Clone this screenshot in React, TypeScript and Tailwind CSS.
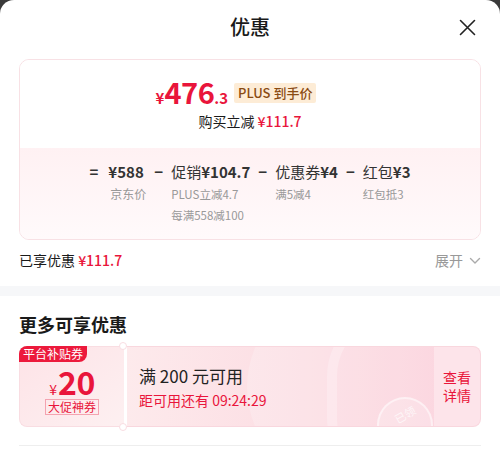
import React from "react";

const RED = "#e9153b";

function Minus() {
  return <span className="text-[15px] leading-[22px] font-bold text-[#333]">−</span>;
}

export default function App() {
  return (
    <div className="w-[500px] h-[449px] bg-[#3a3a3a] overflow-hidden" style={{ fontFamily: '"Noto Sans CJK SC", "Noto Sans", sans-serif' }}>
      <div className="w-[500px] h-[449px] bg-white rounded-t-[14px] flex flex-col">
        {/* Header */}
        <div className="relative h-[54px] flex items-center justify-center shrink-0">
          <span className="text-[20px] font-medium text-[#1a1a1a] leading-none">优惠</span>
          <svg className="absolute right-[24px] top-[19px]" width="17" height="17" viewBox="0 0 17 17" fill="none">
            <path d="M1.5 1.5 L15.5 15.5 M15.5 1.5 L1.5 15.5" stroke="#222" strokeWidth="1.6" strokeLinecap="round" />
          </svg>
        </div>

        {/* Summary card */}
        <div className="mx-[19px] mt-[5px] h-[181px] border border-[#f8e1e5] rounded-[10px] overflow-hidden flex flex-col shrink-0">
          <div className="h-[88px] bg-white flex flex-col items-center pt-[18px]">
            <div className="flex items-center gap-[6px] h-[30px] pr-[28px]">
              <div className="flex items-baseline font-bold" style={{ color: RED }}>
                <span className="text-[15px]">¥</span>
                <span className="text-[29px] leading-none tracking-[-0.5px]">476</span>
                <span className="text-[15px]">.3</span>
              </div>
              <span className="bg-[#fdecd6] text-[#8a4b12] text-[13px] leading-[20px] px-[4px] rounded-[2px] font-medium">PLUS 到手价</span>
            </div>
            <div className="mt-[3px] text-[14px] text-[#1a1a1a] leading-[20px]">
              购买立减 <span className="font-medium" style={{ color: RED }}>¥111.7</span>
            </div>
          </div>
          <div className="flex-1 bg-gradient-to-b from-[#fff1f3] to-[#fffafb] pt-[13px]">
            <div className="flex justify-center items-start gap-[8px] text-[#333]">
              <span className="text-[15px] leading-[22px] font-semibold mr-[2px]">=</span>
              <div className="flex flex-col">
                <span className="text-[15px] leading-[22px] font-semibold">¥588</span>
                <span className="text-[12px] leading-[22px] text-[#999] pl-[2px]">京东价</span>
              </div>
              <Minus />
              <div className="flex flex-col">
                <span className="text-[15px] leading-[22px]">促销<span className="font-semibold">¥104.7</span></span>
                <span className="text-[11.5px] leading-[22px] text-[#999]">PLUS立减4.7</span>
                <span className="text-[11.5px] leading-[20px] text-[#999]">每满558减100</span>
              </div>
              <Minus />
              <div className="flex flex-col">
                <span className="text-[15px] leading-[22px]">优惠券<span className="font-semibold">¥4</span></span>
                <span className="text-[11.5px] leading-[22px] text-[#999]">满5减4</span>
              </div>
              <Minus />
              <div className="flex flex-col">
                <span className="text-[15px] leading-[22px]">红包<span className="font-semibold">¥3</span></span>
                <span className="text-[11.5px] leading-[22px] text-[#999]">红包抵3</span>
              </div>
            </div>
          </div>
        </div>

        {/* Enjoyed row */}
        <div className="mx-[19px] h-[41px] flex items-center justify-between shrink-0">
          <span className="text-[14px] text-[#1a1a1a]">
            已享优惠 <span className="font-medium" style={{ color: RED }}>¥111.7</span>
          </span>
          <span className="flex items-center gap-[6px] text-[14px] text-[#999]">
            展开
            <svg width="12" height="8" viewBox="0 0 12 8" fill="none">
              <path d="M1.5 1.5 L6 6 L10.5 1.5" stroke="#aaa" strokeWidth="1.4" strokeLinecap="round" strokeLinejoin="round" />
            </svg>
          </span>
        </div>

        <div className="h-[5px] shrink-0" />
        <div className="h-[10px] bg-[#f6f7f9] shrink-0" />

        {/* More offers */}
        <div className="px-[19px] pt-[16px] shrink-0">
          <div className="text-[18px] font-bold text-[#1a1a1a] leading-[24px]">更多可享优惠</div>
          <div className="mt-[10px] h-[81px] flex relative">
            {/* stub */}
            <div className="relative w-[105px] h-full rounded-l-[8px] bg-gradient-to-br from-[#fde3e7] to-[#fdf0f1] border border-[#f9dde2] border-r-0 flex flex-col items-center">
              <div className="absolute left-[-1px] top-[-1px] h-[16px] px-[4px] bg-[#ec1a3c] text-white text-[12px] leading-[16px] rounded-tl-[8px] rounded-br-[8px]">平台补贴券</div>
              <div className="mt-[19px] h-[30px] flex items-baseline leading-[30px]" style={{ color: RED }}>
                <span className="text-[14px] mr-[1px]">¥</span>
                <span className="text-[32px] font-semibold tracking-[-0.5px]">20</span>
              </div>
              <div className="mt-[3px] h-[16px] px-[2px] border border-[#f4a3b0] text-[12px] leading-[14px]" style={{ color: RED }}>大促神券</div>
            </div>
            {/* main */}
            <div className="relative flex-1 h-full ml-[3px] overflow-hidden rounded-r-[8px] border border-[#f9d7de] border-l-0 bg-gradient-to-r from-[#fdeaec] via-[#fcdde3] to-[#fbc9d6] flex">
              <div className="absolute left-[120px] top-[-60px] w-[260px] h-[200px] rounded-full bg-[#ffffff] opacity-20" />
              <div className="absolute left-[200px] top-[-40px] w-[140px] h-[180px] rounded-full border-[10px] border-white opacity-25" />
              <div className="relative flex-1 pl-[12px] pt-[17px] flex flex-col">
                <span className="text-[17px] leading-[24px] text-[#222]">满 200 元可用</span>
                <span className="mt-[2px] text-[14px] leading-[20px]" style={{ color: RED }}>距可用还有 09:24:29</span>
              </div>
              <div className="absolute left-[250px] top-[50px] w-[56px] h-[56px] rounded-full border-[2px] border-white/50 bg-white/20 flex items-start justify-center pt-[9px]">
                <span className="text-white/70 text-[11px] leading-[13px] rotate-[-30deg]">已领</span>
              </div>
              <div className="relative w-[46px] h-full bg-[#fde4ea] flex flex-col items-center justify-center gap-[1px] text-[14px] leading-[17px]" style={{ color: RED }}>
                <span>查看</span>
                <span>详情</span>
              </div>
            </div>
            {/* notches */}
            <div className="absolute left-[100px] top-[-4px] w-[8px] h-[8px] rounded-full bg-white border border-[#f9dde2]" />
            <div className="absolute left-[100px] bottom-[-4px] w-[8px] h-[8px] rounded-full bg-white border border-[#f9dde2]" />
          </div>
          <div className="mt-[18px] h-px bg-[#eeeeee]" />
        </div>
      </div>
    </div>
  );
}
